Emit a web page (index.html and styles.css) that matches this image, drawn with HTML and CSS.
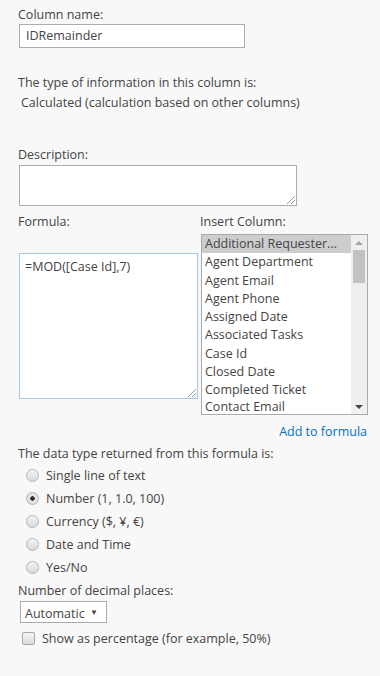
FILE: index.html
```html
<!DOCTYPE html>
<html lang="en">

<head>
    <meta charset="utf-8">
    <meta name="viewport" content="width=device-width, initial-scale=1.0">
    <title>Column settings</title>
    <link rel="stylesheet" href="styles.css">
</head>

<body>
    <div class="side">
        <!-- kolonnenavn -->
        <div class="label">Column name:</div>
        <div class="input name">IDRemainder</div>

        <div class="label type-label">The type of information in this column is:</div>
        <div class="label calc">Calculated (calculation based on other columns)</div>

        <div class="label desc-label">Description:</div>
        <div class="input desc"><span class="grip"></span></div>

        <!-- formel og kolonneliste -->
        <div class="formula-row">
            <div class="formula-col">
                <div class="label">Formula:</div>
                <div class="input formula">=MOD([Case Id],7)<span class="grip"></span></div>
            </div>
            <div class="insert-col">
                <div class="label">Insert Column:</div>
                <div class="listbox">
                    <ul class="items">
                        <li class="picked">Additional Requester...</li>
                        <li>Agent Department</li>
                        <li>Agent Email</li>
                        <li>Agent Phone</li>
                        <li>Assigned Date</li>
                        <li>Associated Tasks</li>
                        <li>Case Id</li>
                        <li>Closed Date</li>
                        <li>Completed Ticket</li>
                        <li>Contact Email</li>
                    </ul>
                    <div class="scrollbar">
                        <span class="arrow up"></span>
                        <span class="thumb"></span>
                        <span class="arrow down"></span>
                    </div>
                </div>
                <a class="add" href="#">Add to formula</a>
            </div>
        </div>

        <div class="label return-label">The data type returned from this formula is:</div>
        <div class="choices">
            <div class="choice"><span class="radio"></span>Single line of text</div>
            <div class="choice"><span class="radio checked"></span>Number (1, 1.0, 100)</div>
            <div class="choice"><span class="radio"></span>Currency ($, ¥, €)</div>
            <div class="choice"><span class="radio"></span>Date and Time</div>
            <div class="choice"><span class="radio"></span>Yes/No</div>
        </div>

        <div class="label decimal-label">Number of decimal places:</div>
        <div class="select">Automatic <span class="caret">▼</span></div>

        <div class="check-row"><span class="checkbox"></span>Show as percentage (for example, 50%)</div>
    </div>
</body>

</html>
```

FILE: styles.css
```css
body {
    margin: 0;
    background-color: #f8f8f8;
    font-family: 'Open Sans', 'Noto Sans', sans-serif;
    font-size: 12.5px;
    color: #444444;
}

.side {
    padding: 5px 0 0 18px;
}

.label {
    line-height: 20px;
    white-space: nowrap;
}

.input {
    position: relative;
    box-sizing: border-box;
    margin-left: 1px;
    background-color: #ffffff;
    border: 1px solid #ababab;
    line-height: 20px;
    padding: 1px 6px;
}

.name {
    width: 226px;
    height: 24px;
    margin-top: -1px;
}

.type-label {
    margin-top: 25px;
}

.calc {
    margin-left: 3px;
}

.desc-label {
    margin-top: 32px;
}

.desc {
    width: 278px;
    height: 41px;
}

.grip {
    position: absolute;
    right: 1px;
    bottom: 1px;
    width: 8px;
    height: 8px;
    background: linear-gradient(135deg, transparent 45%, #9a9a9a 45%, #9a9a9a 55%, transparent 55%, transparent 70%, #9a9a9a 70%, #9a9a9a 80%, transparent 80%);
}

.formula-row {
    display: flex;
    margin-top: 6px;
}

.formula-col {
    width: 182px;
}

.formula {
    width: 179px;
    height: 146px;
    margin-top: 21px;
    border-color: #a6c8e8;
    padding: 3px 5px;
}

.insert-col {
    display: flex;
    flex-direction: column;
    width: 167px;
}

.listbox {
    display: flex;
    box-sizing: border-box;
    width: 167px;
    height: 181px;
    margin: 2px 0 0 1px;
    border: 1px solid #ababab;
    background-color: #ffffff;
}

.items {
    flex: 1;
    list-style: none;
    margin: 0;
    padding: 0;
    overflow: hidden;
}

.items li {
    height: 18.3px;
    line-height: 18.3px;
    padding-left: 3px;
    white-space: nowrap;
}

.items li:last-child {
    height: 14px;
    line-height: 14px;
}

.items .picked {
    background-color: #cdcdcd;
}

.scrollbar {
    display: flex;
    flex-direction: column;
    align-items: center;
    width: 16px;
    background-color: #efefef;
}

.arrow {
    width: 0;
    height: 0;
    border-left: 4px solid transparent;
    border-right: 4px solid transparent;
    margin: 6px 0 5px;
}

.up {
    border-bottom: 4px solid #a3a3a3;
}

.down {
    border-top: 4px solid #444444;
    margin-top: auto;
}

.thumb {
    width: 12px;
    height: 33px;
    background-color: #c2c2c2;
}

.add {
    align-self: flex-end;
    margin-top: 7px;
    line-height: 20px;
    color: #0072c6;
    text-decoration: none;
}

.return-label {
    margin-top: 2px;
}

.choice {
    display: flex;
    align-items: center;
    height: 23px;
    padding-left: 8px;
}

.radio {
    box-sizing: border-box;
    width: 13px;
    height: 13px;
    margin-right: 7px;
    border: 1px solid #b4b4b4;
    border-radius: 50%;
    background: linear-gradient(#f4f4f4, #d9d9d9);
}

.checked {
    background: radial-gradient(circle, #333333 0, #333333 2px, #e8e8e8 2.5px, #d9d9d9 100%);
}

.decimal-label {
    margin-top: 2px;
}

.select {
    display: inline-block;
    box-sizing: border-box;
    width: 87px;
    height: 22px;
    margin-left: 2px;
    padding-left: 4px;
    line-height: 20px;
    background-color: #ffffff;
    border: 1px solid #ababab;
}

.caret {
    font-size: 8px;
    vertical-align: 3px;
    margin-left: 2px;
}

.check-row {
    display: flex;
    align-items: center;
    height: 20px;
    margin-top: 5px;
    padding-left: 4px;
}

.checkbox {
    box-sizing: border-box;
    width: 13px;
    height: 13px;
    margin-right: 7px;
    border: 1px solid #a8a8a8;
    border-radius: 2px;
    background: linear-gradient(#f4f4f4, #dcdcdc);
}
```
